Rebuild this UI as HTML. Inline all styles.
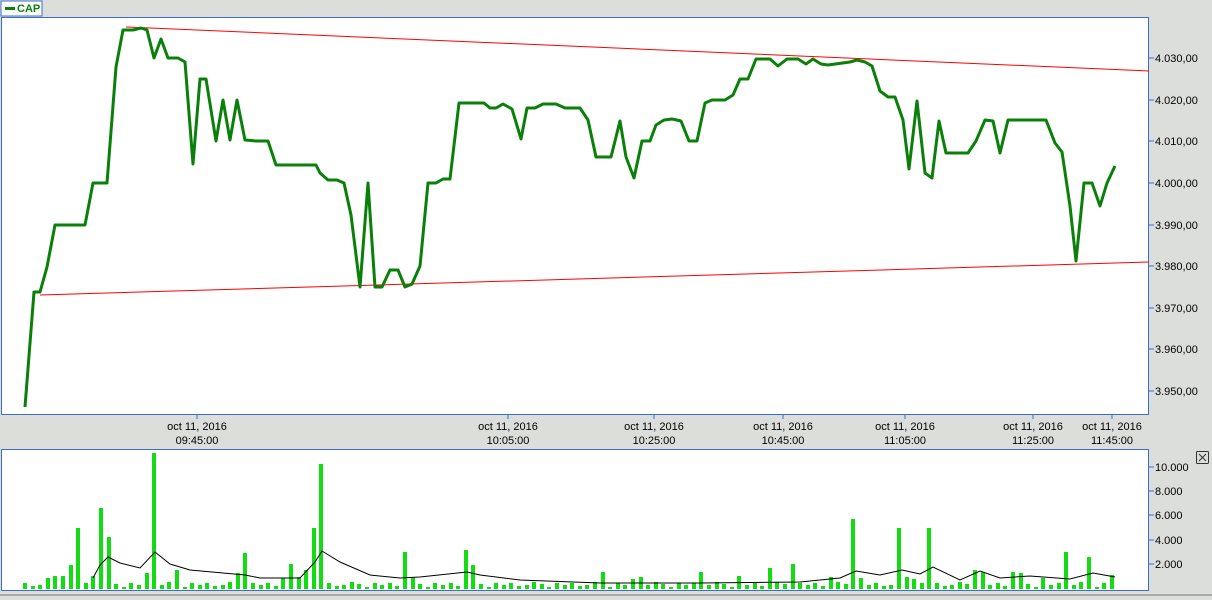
<!DOCTYPE html>
<html><head><meta charset="utf-8"><style>
body{margin:0;width:1212px;height:600px;background:#dcdedc;font-family:"Liberation Sans",sans-serif;overflow:hidden;position:relative}
svg{position:absolute;left:0;top:0}
</style></head><body>
<svg width="1212" height="600" xmlns="http://www.w3.org/2000/svg" font-family="Liberation Sans, sans-serif" font-size="11">
<rect x="1" y="1" width="41" height="15" fill="#fff" stroke="#3a6fc4"/>
<rect x="5" y="7" width="10" height="3" fill="#0a800a"/>
<text x="17" y="12" font-weight="bold" fill="#0a800a">CAP</text>
<rect x="1.5" y="17.5" width="1147" height="397" fill="#fff" stroke="#3a6fc4"/>
<g stroke="#3a6fc4"><line x1="1149" y1="58" x2="1154" y2="58"/><line x1="1149" y1="100" x2="1154" y2="100"/><line x1="1149" y1="141" x2="1154" y2="141"/><line x1="1149" y1="183" x2="1154" y2="183"/><line x1="1149" y1="225" x2="1154" y2="225"/><line x1="1149" y1="266" x2="1154" y2="266"/><line x1="1149" y1="308" x2="1154" y2="308"/><line x1="1149" y1="349" x2="1154" y2="349"/><line x1="1149" y1="391" x2="1154" y2="391"/>
<line x1="197" y1="414" x2="197" y2="419"/><line x1="508" y1="414" x2="508" y2="419"/><line x1="654" y1="414" x2="654" y2="419"/><line x1="783" y1="414" x2="783" y2="419"/><line x1="905" y1="414" x2="905" y2="419"/><line x1="1033" y1="414" x2="1033" y2="419"/><line x1="1112" y1="414" x2="1112" y2="419"/></g>
<g fill="#000"><text x="1155" y="62">4.030,00</text><text x="1155" y="104">4.020,00</text><text x="1155" y="145">4.010,00</text><text x="1155" y="187">4.000,00</text><text x="1155" y="229">3.990,00</text><text x="1155" y="270">3.980,00</text><text x="1155" y="312">3.970,00</text><text x="1155" y="353">3.960,00</text><text x="1155" y="395">3.950,00</text></g>
<g fill="#000" text-anchor="middle"><text x="197" y="430">oct 11, 2016</text><text x="197" y="444">09:45:00</text><text x="508" y="430">oct 11, 2016</text><text x="508" y="444">10:05:00</text><text x="654" y="430">oct 11, 2016</text><text x="654" y="444">10:25:00</text><text x="783" y="430">oct 11, 2016</text><text x="783" y="444">10:45:00</text><text x="905" y="430">oct 11, 2016</text><text x="905" y="444">11:05:00</text><text x="1033" y="430">oct 11, 2016</text><text x="1033" y="444">11:25:00</text><text x="1112" y="430">oct 11, 2016</text><text x="1112" y="444">11:45:00</text></g>
<line x1="126" y1="27" x2="1149" y2="71" stroke="#f00"/>
<line x1="40" y1="295" x2="1149" y2="262" stroke="#f00"/>
<polyline fill="none" stroke="#0a800a" stroke-width="3" stroke-linejoin="round" points="25,407 34,292 40,292 47,267 55,225 85,225 93,183 107,183 116,67 123,30 133,30 141,28 147,30 154,58 161,39 168,58 178,58 185,62 193,164 200,79 206,79 216,141 223,100 230,140 237,100 245,140 256,141 268,141 276,165 316,165 320,173 328,180 337,180 344,183 351,215 360,287 368,183 375,287 382,287 390,270 398,270 405,287 412,284 420,266 428,183 436,183 443,179 450,179 459,103 484,103 490,108 496,108 503,104 512,109 521,139 527,108 535,108 543,104 556,104 565,108 580,108 588,120 596,157 611,157 620,121 626,157 634,178 642,141 650,141 656,125 664,120 672,119 681,121 689,141 697,141 705,103 712,100 725,100 733,95 740,79 748,79 756,59 770,59 778,66 787,59 798,59 806,64 813,59 821,64 828,65 850,62 857,60 865,62 872,66 880,91 888,97 895,97 903,120 909,169 917,101 925,173 932,178 939,121 946,153 968,153 976,141 985,120 993,121 1000,153 1008,120 1046,120 1055,143 1062,152 1070,206 1076,261 1084,183 1092,183 1100,206 1107,183 1115,166"/>
<rect x="1.5" y="449.5" width="1147" height="141" fill="#fff" stroke="#3a6fc4"/>
<g stroke="#3a6fc4"><line x1="1149" y1="467" x2="1154" y2="467"/><line x1="1149" y1="491" x2="1154" y2="491"/><line x1="1149" y1="515" x2="1154" y2="515"/><line x1="1149" y1="540" x2="1154" y2="540"/><line x1="1149" y1="564" x2="1154" y2="564"/></g>
<g fill="#000"><text x="1155" y="471">10.000</text><text x="1155" y="495">8.000</text><text x="1155" y="519">6.000</text><text x="1155" y="544">4.000</text><text x="1155" y="568">2.000</text></g>
<rect x="1196.5" y="451.5" width="12" height="12" fill="#dcdedc" stroke="#333" rx="1"/>
<path d="M1199 454l7 7M1206 454l-7 7" stroke="#333"/>
<g id="bars" fill="#14dc14"></g>
<polyline fill="none" stroke="#000" stroke-width="1" points="93,578 100,565 108,557 120,563 140,568 155,552 170,564 190,570 245,575 260,578 300,578 315,562 322,551 340,562 370,575 400,578 420,577 467,572 480,575 520,580 600,583 700,583 800,582 840,578 856,571 880,575 902,570 920,574 933,567 960,580 980,571 1000,578 1030,576 1070,579 1093,573 1115,577"/>
<rect x="0" y="594" width="1212" height="2" fill="#aaa"/>
</svg>
<script>
var big={78:528,101:508,108:537,155:453,245:553,315:528,322:464,406:552,467:550,474:565,604:572,856:519,902:528,933:528,1070:552,1093:557,1086:571,1115:575,70:565,62:576,55:576,48:578,85:583,93:576,148:573,177:570,238:573,292:564,300:577,307:570,285:578,413:577,795:564,771:568,705:572,741:576,832:577,1013:572,1018:573,1040:578,862:578,909:577,916:579,977:570,985:572,639:577,634:579};
var ds=[583,586,585,582,584,587,583,585];var xs=[],ts=[];var i=0;
for(var x=25;x<=1115.5;x+=7.6){xs.push(Math.round(x));ts.push(ds[i%8]);i++;}
for(var k in big){var bi=0,bd=1e9;for(var j=0;j<xs.length;j++){var d=Math.abs(xs[j]-k);if(d<bd){bd=d;bi=j;}}if(big[k]<ts[bi])ts[bi]=big[k];}
var s='';for(var j=0;j<xs.length;j++)s+='<rect x="'+(xs[j]-2)+'" y="'+ts[j]+'" width="4" height="'+(589-ts[j])+'"/>';
document.getElementById('bars').innerHTML=s;
</script>
</body></html>
